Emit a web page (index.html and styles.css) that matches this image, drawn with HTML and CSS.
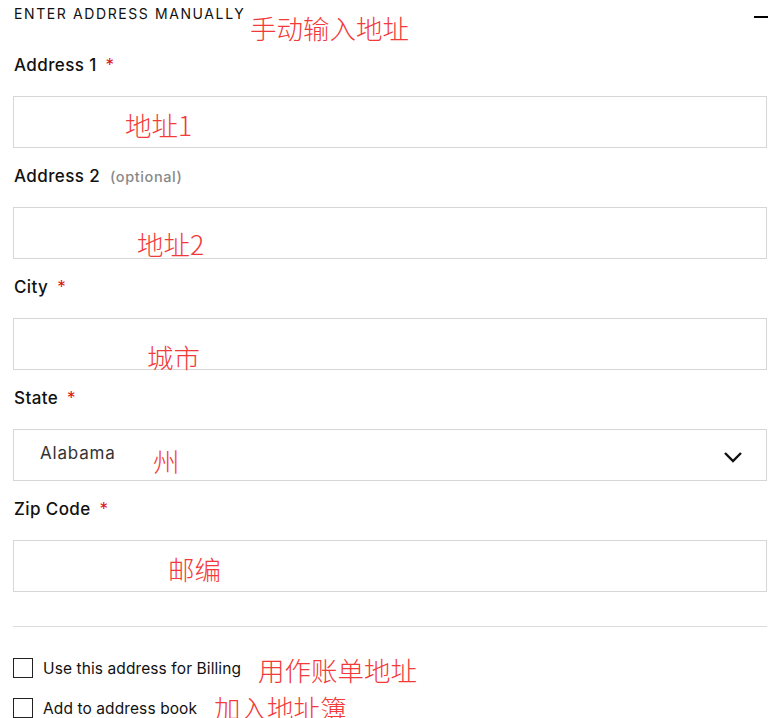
FILE: index.html
```html
<!DOCTYPE html>
<html lang="en">
<head>
<meta charset="utf-8">
<link rel="stylesheet" href="styles.css">
</head>
<body>
<div class="page">
  <div class="header">
    <span class="header-title">ENTER ADDRESS MANUALLY</span>
    <span class="minus"></span>
    <span class="note note-header">手动输入地址</span>
  </div>

  <div class="field">
    <div class="label">Address 1 <span class="req">*</span></div>
    <div class="input"></div>
    <span class="note note-a1">地址1</span>
  </div>

  <div class="field">
    <div class="label">Address 2 <span class="opt">(optional)</span></div>
    <div class="input"></div>
    <span class="note note-a2">地址2</span>
  </div>

  <div class="field">
    <div class="label">City <span class="req">*</span></div>
    <div class="input"></div>
    <span class="note note-city">城市</span>
  </div>

  <div class="field">
    <div class="label">State <span class="req">*</span></div>
    <div class="input select">
      <span class="select-value">Alabama</span>
      <svg class="chevron" width="20" height="12" viewBox="0 0 20 12"><path d="M2 2 L10 10 L18 2" fill="none" stroke="#111" stroke-width="2.4"/></svg>
    </div>
    <span class="note note-state">州</span>
  </div>

  <div class="field">
    <div class="label">Zip Code <span class="req">*</span></div>
    <div class="input"></div>
    <span class="note note-zip">邮编</span>
  </div>

  <div class="divider"></div>

  <div class="checks">
    <div class="check-row">
      <span class="box"></span>
      <span class="check-label">Use this address for Billing</span>
      <span class="note note-billing">用作账单地址</span>
    </div>
    <div class="check-row">
      <span class="box"></span>
      <span class="check-label">Add to address book</span>
      <span class="note note-book">加入地址簿</span>
    </div>
  </div>
</div>
</body>
</html>
```

FILE: styles.css
```css
* { box-sizing: border-box; }
html, body { margin: 0; padding: 0; background: #fff; }
body {
  font-family: Inter, "Liberation Sans", Arial, sans-serif;
  color: #111;
  overflow: hidden;
}
.page {
  width: 768px;
  height: 718px;
  padding: 0 1px 0 13px;
}
.header {
  position: relative;
  height: 55px;
  display: flex;
  align-items: flex-start;
  justify-content: space-between;
  padding-top: 6px;
}
.header-title {
  font-size: 14px;
  letter-spacing: 1.6px;
  line-height: 16px;
  padding-left: 1px;
  color: #111;
}
.minus {
  width: 14px;
  height: 2px;
  background: #000;
  margin-top: 10px;
  margin-right: -1px;
}
.note {
  position: absolute;
  color: #f23a3a;
  font-family: "Noto Sans CJK SC", sans-serif;
  font-weight: 300;
  font-size: 26.5px;
  line-height: 1;
  white-space: nowrap;
}
.note-header { left: 237px; top: 15px; }
.field {
  position: relative;
  margin-bottom: 18px;
}
.label {
  height: 20px;
  line-height: 20px;
  font-size: 17px;
  letter-spacing: 0.4px;
  font-weight: 500;
  margin-bottom: 21px;
  padding-left: 1px;
  color: #111;
}
.req {
  color: #d11;
  font-weight: 400;
  margin-left: 4px;
}
.opt {
  color: #888;
  font-size: 14.5px;
  letter-spacing: 0.6px;
  font-weight: 500;
  margin-left: 5px;
}
.input {
  height: 52px;
  border: 1px solid #d6d6d6;
  background: #fff;
}
.select {
  display: flex;
  align-items: center;
  justify-content: space-between;
  padding: 0 23px 0 26px;
}
.select-value {
  font-size: 17px;
  letter-spacing: 0.8px;
  color: #333;
  margin-top: -4px;
}
.chevron { margin-top: 4px; }
.note-a1 { left: 112px; top: 57px; }
.note-a2 { left: 124px; top: 65px; }
.note-city { left: 134px; top: 67px; }
.note-state { left: 140px; top: 60px; }
.note-zip { left: 155px; top: 57px; }
.divider {
  height: 1px;
  background: #dcdcdc;
  margin-top: 34px;
}
.checks {
  padding-top: 31px;
  display: flex;
  flex-direction: column;
  gap: 20px;
}
.check-row {
  position: relative;
  display: flex;
  align-items: center;
  height: 20px;
}
.box {
  width: 20px;
  height: 20px;
  border: 1.5px solid #222;
  flex: none;
}
.check-label {
  font-size: 15.5px;
  letter-spacing: 0.1px;
  margin-left: 10px;
  color: #111;
}
.note-billing { left: 245px; top: -1px; }
.note-book { left: 201px; top: -3px; }
```
